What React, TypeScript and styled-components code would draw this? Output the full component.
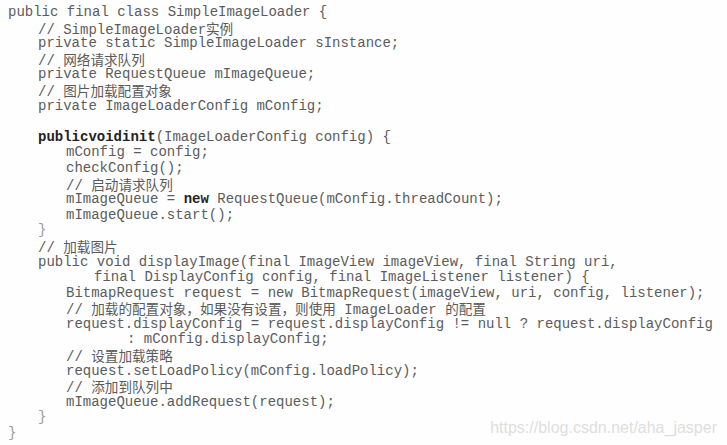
import React from "react";
import styled, { createGlobalStyle } from "styled-components";

const Global = createGlobalStyle`
  html, body { margin: 0; padding: 0; background: #ffffff; }
  body { width: 727px; height: 445px; overflow: hidden; }
`;

const Page = styled.div`
  position: relative;
  width: 727px;
  height: 445px;
  box-sizing: border-box;
  padding: 5px 0 0 8px;
  background: #fefefe;
`;

const Code = styled.div`
  display: flex;
  flex-direction: column;
  font-family: "Liberation Mono", "Noto Sans CJK SC", monospace;
  font-size: 14px;
  line-height: 15.6px;
  color: #5c5c5c;
  white-space: pre;
`;

const Line = styled.div<{ $indent: number; $faint?: boolean }>`
  height: 15.6px;
  padding-left: ${(p) => p.$indent}px;
  color: ${(p) => (p.$faint ? "#9a9a9a" : "inherit")};
`;

const Cjk = styled.span`
  font-family: "Noto Sans CJK SC", sans-serif;
  font-size: 13.6px;
  color: #5a5a5a;
`;

const Kw = styled.b`
  font-weight: 700;
  color: #222222;
`;

const Watermark = styled.div`
  position: absolute;
  right: 10px;
  bottom: 8px;
  font-family: "Liberation Sans", Arial, sans-serif;
  font-size: 16px;
  line-height: 18px;
  color: #dedede;
`;

const I0 = 0;
const I1 = 30;
const I2 = 58;

export default function App() {
  return (
    <>
      <Global />
      <Page>
        <Code>
          <Line $indent={I0}>public final class SimpleImageLoader {"{"}</Line>
          <Line $indent={I1}>// SimpleImageLoader<Cjk>实例</Cjk></Line>
          <Line $indent={I1}>private static SimpleImageLoader sInstance;</Line>
          <Line $indent={I1}>// <Cjk>网络请求队列</Cjk></Line>
          <Line $indent={I1}>private RequestQueue mImageQueue;</Line>
          <Line $indent={I1}>// <Cjk>图片加载配置对象</Cjk></Line>
          <Line $indent={I1}>private ImageLoaderConfig mConfig;</Line>
          <Line $indent={I1}> </Line>
          <Line $indent={I1}><Kw>publicvoidinit</Kw>(ImageLoaderConfig config) {"{"}</Line>
          <Line $indent={I2}>mConfig = config;</Line>
          <Line $indent={I2}>checkConfig();</Line>
          <Line $indent={I2}>// <Cjk>启动请求队列</Cjk></Line>
          <Line $indent={I2}>mImageQueue = <Kw>new</Kw> RequestQueue(mConfig.threadCount);</Line>
          <Line $indent={I2}>mImageQueue.start();</Line>
          <Line $indent={I1} $faint>{"}"}</Line>
          <Line $indent={I1}>// <Cjk>加载图片</Cjk></Line>
          <Line $indent={I1}>public void displayImage(final ImageView imageView, final String uri,</Line>
          <Line $indent={86}>final DisplayConfig config, final ImageListener listener) {"{"}</Line>
          <Line $indent={I2}>BitmapRequest request = new BitmapRequest(imageView, uri, config, listener);</Line>
          <Line $indent={I2}>// <Cjk>加载的配置对象，如果没有设置，则使用</Cjk> ImageLoader <Cjk>的配置</Cjk></Line>
          <Line $indent={I2}>request.displayConfig = request.displayConfig != null ? request.displayConfig</Line>
          <Line $indent={119}>: mConfig.displayConfig;</Line>
          <Line $indent={I2}>// <Cjk>设置加载策略</Cjk></Line>
          <Line $indent={I2}>request.setLoadPolicy(mConfig.loadPolicy);</Line>
          <Line $indent={I2}>// <Cjk>添加到队列中</Cjk></Line>
          <Line $indent={I2}>mImageQueue.addRequest(request);</Line>
          <Line $indent={I1} $faint>{"}"}</Line>
          <Line $indent={I0} $faint>{"}"}</Line>
        </Code>
        <Watermark>https://blog.csdn.net/aha_jasper</Watermark>
      </Page>
    </>
  );
}
